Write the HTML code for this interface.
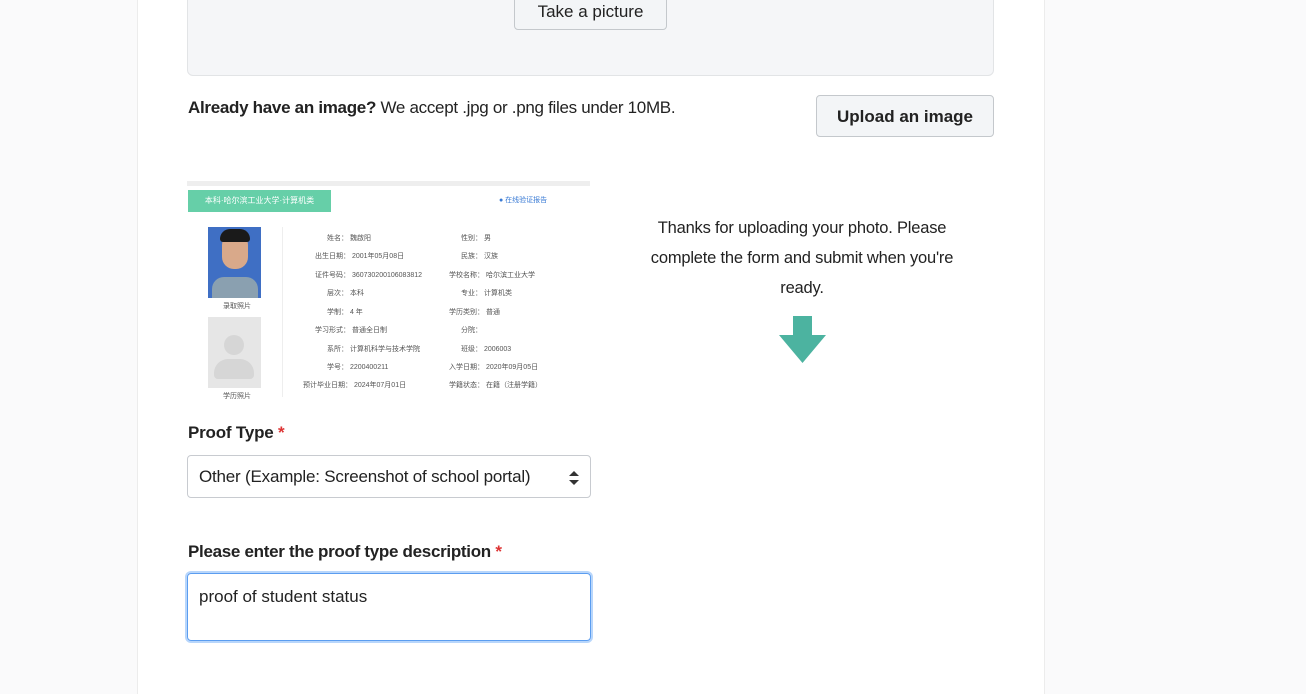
<!DOCTYPE html>
<html><head><meta charset="utf-8"><style>
body{margin:0;width:1306px;height:694px;background:#fafafb;font-family:"Liberation Sans","Noto Sans CJK SC",sans-serif;color:#222;position:relative;overflow:hidden}
.card{position:absolute;left:137px;top:0;width:906px;height:694px;background:#fff;border-left:1px solid #ececec;border-right:1px solid #ececec}
.a{position:absolute}
.btn{position:absolute;background:#f3f5f7;border:1px solid #c4c8cc;border-radius:4px;font-size:17px;color:#222;text-align:center;box-sizing:border-box}
.sm{font-size:7px;color:#555;position:absolute;white-space:nowrap}
</style></head><body>
<div class="card"></div>
<div class="a" style="left:187px;top:-10px;width:805px;height:84px;background:#f5f6f8;border:1px solid #e2e4e6;border-radius:6px"></div>
<div class="btn" style="left:514px;top:-8px;width:153px;height:38px;line-height:38px;padding-top:0px">Take a picture</div>
<div class="a" style="left:188px;top:98px;font-size:17px;letter-spacing:-0.3px"><b>Already have an image?</b> We accept .jpg or .png files under 10MB.</div>
<div class="btn" style="left:816px;top:95px;width:178px;height:42px;line-height:42px;font-weight:bold">Upload an image</div>

<div class="a" style="left:187px;top:181px;width:403px;height:237px;background:#fff;overflow:hidden">
 <div class="a" style="left:0;top:0;width:403px;height:5px;background:#eee"></div>
 <div class="a" style="left:1px;top:9px;width:143px;height:22px;background:#66cfa8;color:#fff;font-size:8px;line-height:22px;text-align:center">本科·哈尔滨工业大学·计算机类</div>
 <div class="a" style="left:312px;top:14px;font-size:7px;color:#3a7bd5">● 在线验证报告</div>
 <div class="a" style="left:21px;top:46px;width:53px;height:71px;background:#3f6fc4">
  <div class="a" style="left:14px;top:6px;width:26px;height:36px;border-radius:12px;background:#d9a98a"></div>
  <div class="a" style="left:12px;top:2px;width:30px;height:13px;border-radius:10px 10px 3px 3px;background:#1a1a1a"></div>
  <div class="a" style="left:4px;top:50px;width:46px;height:21px;border-radius:12px 12px 0 0;background:#8aa0b0"></div>
 </div>
 <div class="sm" style="left:36px;top:120px">录取照片</div>
 <div class="a" style="left:21px;top:136px;width:53px;height:71px;background:#e6e6e6">
  <div class="a" style="left:16px;top:18px;width:20px;height:20px;border-radius:50%;background:#d6d6d6"></div>
  <div class="a" style="left:6px;top:42px;width:40px;height:20px;border-radius:14px 14px 4px 4px;background:#d6d6d6"></div>
 </div>
 <div class="sm" style="left:36px;top:210px">学历照片</div>
 <div class="a" style="left:95px;top:46px;width:1px;height:170px;background:#eee"></div>
 <div class="sm" style="left:140px;top:52px">姓名： 魏啟阳</div><div class="sm" style="left:274px;top:52px">性别： 男</div>
 <div class="sm" style="left:128px;top:70px">出生日期： 2001年05月08日</div><div class="sm" style="left:274px;top:70px">民族： 汉族</div>
 <div class="sm" style="left:128px;top:89px">证件号码： 360730200106083812</div><div class="sm" style="left:262px;top:89px">学校名称： 哈尔滨工业大学</div>
 <div class="sm" style="left:140px;top:107px">层次： 本科</div><div class="sm" style="left:274px;top:107px">专业： 计算机类</div>
 <div class="sm" style="left:140px;top:126px">学制： 4 年</div><div class="sm" style="left:262px;top:126px">学历类别： 普通</div>
 <div class="sm" style="left:128px;top:144px">学习形式： 普通全日制</div><div class="sm" style="left:274px;top:144px">分院：</div>
 <div class="sm" style="left:140px;top:163px">系所： 计算机科学与技术学院</div><div class="sm" style="left:274px;top:163px">班级： 2006003</div>
 <div class="sm" style="left:140px;top:181px">学号： 2200400211</div><div class="sm" style="left:262px;top:181px">入学日期： 2020年09月05日</div>
 <div class="sm" style="left:116px;top:199px">预计毕业日期： 2024年07月01日</div><div class="sm" style="left:262px;top:199px">学籍状态： 在籍（注册学籍）</div>
</div>

<div class="a" style="left:630px;top:213px;width:344px;text-align:center;font-size:16.5px;letter-spacing:-0.2px;line-height:30px;color:#222">Thanks for uploading your photo. Please complete the form and submit when you're ready.</div>
<svg class="a" style="left:779px;top:316px" width="47" height="47"><polygon points="14,0 33,0 33,19 47,19 23.5,47 0,19 14,19" fill="#4cb3a0"/></svg>

<div class="a" style="left:188px;top:423px;font-size:17px;font-weight:bold;letter-spacing:-0.2px">Proof Type <span style="color:#d33">*</span></div>
<div class="a" style="left:187px;top:455px;width:404px;height:43px;border:1px solid #c8cbd0;border-radius:4px;box-sizing:border-box;font-size:17px;letter-spacing:-0.2px;line-height:41px;padding-left:11px">Other (Example: Screenshot of school portal)
 <svg class="a" style="right:11px;top:15px" width="10" height="14"><polygon points="5,0 10,5 0,5" fill="#333"/><polygon points="5,14 10,9 0,9" fill="#333"/></svg></div>
<div class="a" style="left:188px;top:542px;font-size:17px;font-weight:bold;letter-spacing:-0.3px">Please enter the proof type description <span style="color:#d33">*</span></div>
<div class="a" style="left:187px;top:573px;width:404px;height:68px;border:1px solid #5b9df0;box-shadow:0 0 0 2px #b8d6fb;border-radius:4px;box-sizing:border-box;font-size:17px;padding:13px 11px">proof of student status</div>
</body></html>
